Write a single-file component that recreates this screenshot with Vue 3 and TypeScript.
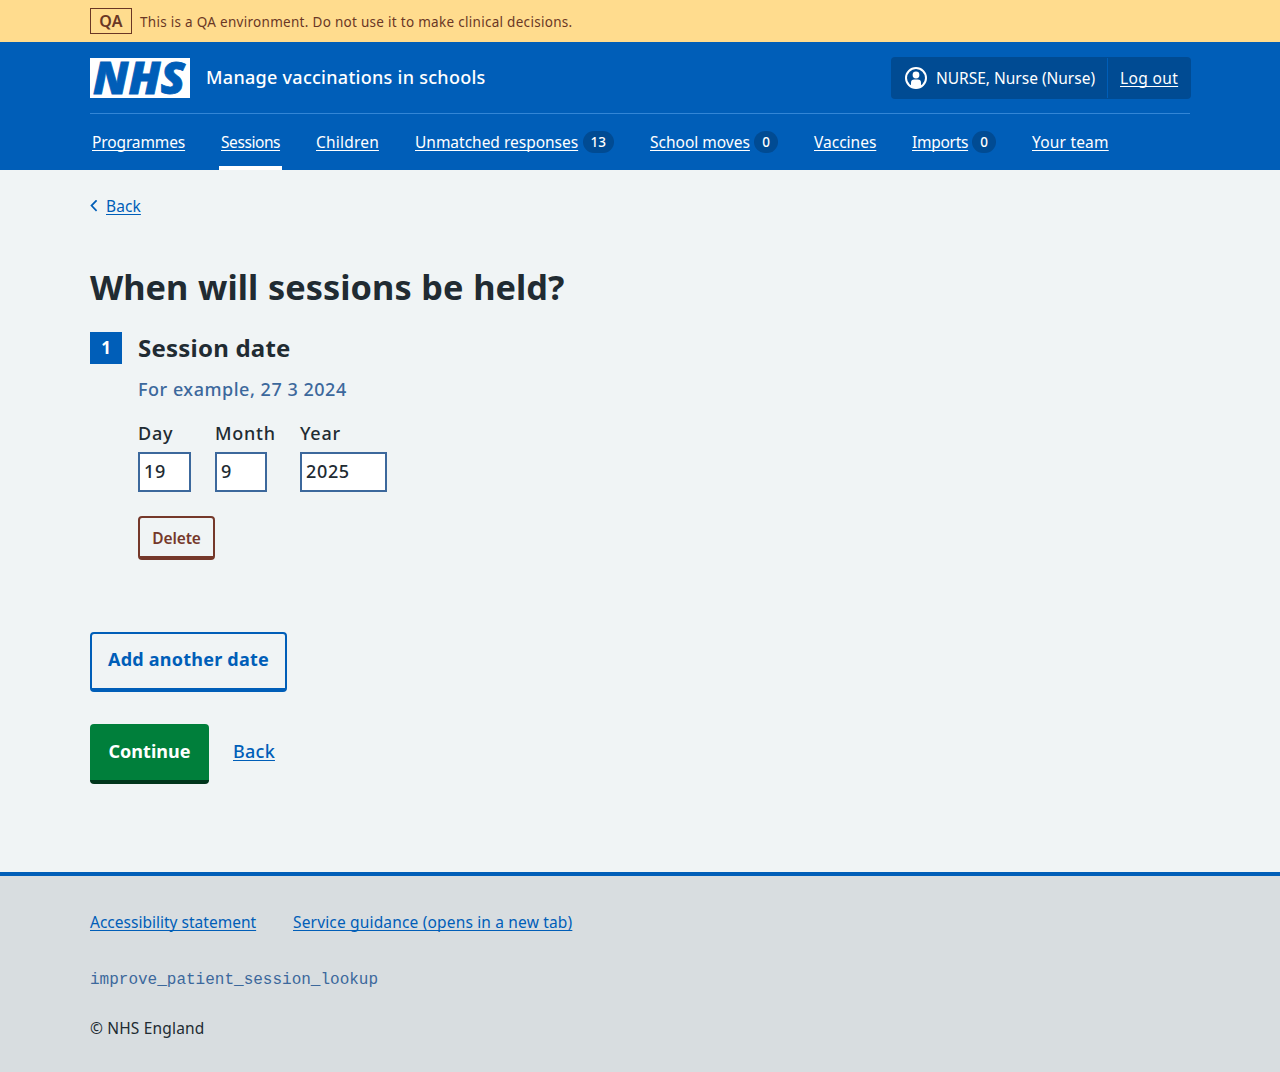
<script setup lang="ts">
import { ref } from 'vue'

interface NavItem {
  label: string
  width: number
  tracking: number
  count?: number
  current?: boolean
}

interface DateField {
  id: string
  label: string
  size: 'two' | 'four'
}

const navItems: NavItem[] = [
  { label: 'Programmes', width: 97, tracking: -0.12 },
  { label: 'Sessions', width: 63, tracking: -0.43, current: true },
  { label: 'Children', width: 67, tracking: 0.2 },
  { label: 'Unmatched responses', width: 203, tracking: -0.01, count: 13 },
  { label: 'School moves', width: 132, tracking: 0, count: 0 },
  { label: 'Vaccines', width: 66, tracking: 0 },
  { label: 'Imports', width: 88, tracking: -0.28, count: 0 },
  { label: 'Your team', width: 81, tracking: 0.2 },
]

const fields: DateField[] = [
  { id: 'day', label: 'Day', size: 'two' },
  { id: 'month', label: 'Month', size: 'two' },
  { id: 'year', label: 'Year', size: 'four' },
]

const date = ref<Record<string, string>>({ day: '19', month: '9', year: '2025' })
</script>

<template>
  <div class="page">
    <div class="environment">
      <div class="container environment-inner">
        <strong class="environment-tag">QA</strong>
        <span>This is a QA environment. Do not use it to make clinical decisions.</span>
      </div>
    </div>

    <header class="header">
      <div class="container">
        <div class="header-top">
          <svg class="logo" viewBox="0 0 100 40" role="img" aria-label="NHS">
            <rect width="100" height="40" fill="#fff" />
            <text x="3" y="36" textLength="92" lengthAdjust="spacingAndGlyphs">NHS</text>
          </svg>
          <span class="service">Manage vaccinations in schools</span>
          <div class="account">
            <span class="account-user">
              <svg class="account-icon" viewBox="0 0 24 24" aria-hidden="true">
                <circle cx="12" cy="12" r="10" fill="none" stroke="#fff" stroke-width="2" />
                <circle cx="12" cy="9" r="3.4" fill="#fff" />
                <path d="M7 21v-4.2A3.3 3.3 0 0 1 10.3 13.5h3.4A3.3 3.3 0 0 1 17 16.8V21a10.5 10.5 0 0 1-10 0z" fill="#fff" />
              </svg>
              <span class="account-name">NURSE, Nurse (Nurse)</span>
            </span>
            <a class="account-logout" href="#">Log out</a>
          </div>
        </div>
        <nav class="nav">
          <div
            v-for="item in navItems"
            :key="item.label"
            class="nav-item"
            :class="{ current: item.current }"
            :style="{ width: item.width + 'px' }"
          >
            <a href="#" :style="{ letterSpacing: item.tracking + 'px' }">{{ item.label }}</a>
            <span v-if="item.count !== undefined" class="badge">{{ item.count }}</span>
          </div>
        </nav>
      </div>
    </header>

    <main class="container main">
      <div class="back">
        <svg width="8" height="12" viewBox="0 0 8 12" aria-hidden="true">
          <path d="M6.6 .3 1.5 5.6l5.1 5.3" fill="none" stroke="#005eb8" stroke-width="1.7" />
        </svg>
        <a href="#">Back</a>
      </div>

      <h1>When will sessions be held?</h1>

      <section class="session">
        <span class="number">1</span>
        <div>
          <h2>Session date</h2>
          <p class="hint">For example, 27 3 2024</p>
          <div class="date">
            <div v-for="f in fields" :key="f.id" class="field" :class="f.id">
              <label :for="f.id">{{ f.label }}</label>
              <input :id="f.id" v-model="date[f.id]" :class="f.size" type="text" inputmode="numeric" />
            </div>
          </div>
          <button class="button delete" type="button">Delete</button>
        </div>
      </section>

      <button class="button add" type="button">Add another date</button>

      <div class="actions">
        <button class="button continue" type="button">Continue</button>
        <a href="#">Back</a>
      </div>
    </main>

    <footer class="footer">
      <div class="container">
        <div class="footer-links">
          <a class="accessibility" href="#">Accessibility statement</a>
          <a class="guidance" href="#">Service guidance (opens in a new tab)</a>
        </div>
        <code>improve_patient_session_lookup</code>
        <p class="copyright">© NHS England</p>
      </div>
    </footer>
  </div>
</template>

<style>
body {
  background: #f0f4f5;
}
</style>

<style scoped>
* {
  box-sizing: border-box;
}
.page {
  height: 1072px;
  display: flex;
  flex-direction: column;
  overflow: hidden;
  background: #f0f4f5;
  color: #212b32;
  font: 450 15.5px/24px 'Noto Sans', 'Open Sans', sans-serif;
}
.container {
  width: 1100px;
  margin: 0 auto;
}
a {
  color: #005eb8;
  text-decoration: underline;
  text-decoration-thickness: 1px;
  text-underline-offset: 2px;
  text-decoration-skip-ink: none;
}

.environment {
  height: 42px;
  background: #ffdc8e;
  color: #6a3725;
  font-size: 13.5px;
  letter-spacing: 0.29px;
}
.environment-inner {
  display: flex;
  align-items: center;
  gap: 8px;
  height: 42px;
}
.environment-inner span {
  padding-top: 1px;
}
.environment-tag {
  width: 42px;
  height: 26px;
  border: 1px solid #6a3725;
  font-size: 16px;
  font-weight: 650;
  letter-spacing: 0.3px;
  line-height: 24px;
  text-align: center;
}

.header {
  height: 128px;
  background: #005eb8;
  color: #fff;
}
.header a {
  color: #fff;
}
.header-top {
  display: flex;
  align-items: center;
  height: 72px;
  border-bottom: 1px solid #3386d6;
}
.logo {
  width: 100px;
  height: 40px;
  overflow: visible;
}
.logo text {
  fill: #005eb8;
  stroke: #005eb8;
  stroke-width: 0.8px;
  font: italic 900 44.5px 'Noto Sans', 'Open Sans', sans-serif;
}
.service {
  margin-left: 16px;
  font-size: 18px;
  font-weight: 480;
  letter-spacing: 0.28px;
  line-height: 26px;
  padding-bottom: 1px;
}
.account {
  display: flex;
  width: 300px;
  height: 42px;
  margin: 0 -1px 0 auto;
  padding: 1px 0;
  border-radius: 4px;
  background: #004b93;
  line-height: 40px;
}
.account-user {
  display: flex;
  align-items: center;
  width: 217px;
  padding-left: 13px;
  border-right: 1px solid #005eb8;
}
.account-icon {
  width: 24px;
  height: 24px;
}
.account-name {
  margin-left: 8px;
  letter-spacing: -0.01px;
  white-space: nowrap;
}
.account-logout {
  margin-left: 12px;
  letter-spacing: 0.36px;
}
.nav {
  display: flex;
  gap: 32px;
  height: 56px;
}
.nav-item {
  display: flex;
  align-items: center;
  flex: none;
  height: 56px;
  padding: 4px 2px 0;
  border-bottom: 4px solid transparent;
  white-space: nowrap;
}
.nav-item.current {
  border-bottom-color: #fff;
}
.badge {
  min-width: 24px;
  height: 22px;
  margin-left: auto;
  padding: 0 8px;
  border-radius: 11px;
  background: #004b93;
  font-size: 13.5px;
  font-weight: 500;
  line-height: 23px;
  text-align: center;
}

.main {
  flex: none;
  height: 702px;
}
.back {
  display: flex;
  align-items: center;
  gap: 8px;
  height: 24px;
  margin-top: 24px;
  letter-spacing: 0.1px;
}
h1 {
  margin: 42px 0 0;
  font-size: 34.3px;
  font-weight: 700;
  letter-spacing: 0.06px;
  word-spacing: 0.6px;
  line-height: 54px;
}
.session {
  display: flex;
  gap: 16px;
  height: 228px;
  margin-top: 18px;
}
.number {
  flex: none;
  width: 32px;
  height: 32px;
  background: #005eb8;
  color: #fff;
  font-size: 17px;
  font-weight: 700;
  line-height: 32px;
  text-align: center;
}
h2 {
  margin: 0;
  font-size: 24px;
  font-weight: 700;
  letter-spacing: 0.22px;
  line-height: 32px;
}
.hint {
  margin: 12px 0 0;
  color: #3c689c;
  font-size: 18px;
  font-weight: 480;
  letter-spacing: 0.52px;
  line-height: 27px;
}
.date {
  display: flex;
  margin-top: 16px;
}
.field {
  font-size: 18px;
  font-weight: 500;
  letter-spacing: 0.75px;
}
.field.day {
  width: 77px;
}
.field.month {
  width: 85px;
}
.field label {
  display: block;
  height: 33px;
  line-height: 28px;
}
input {
  display: block;
  height: 40px;
  padding: 0 4px 2px;
  border: 2px solid #3c689c;
  border-radius: 0;
  background: #fff;
  color: #212b32;
  font: inherit;
  letter-spacing: 0.65px;
}
.two {
  width: 53px;
}
.month .two {
  width: 52px;
}
.four {
  width: 87px;
}
.button {
  display: block;
  padding: 0;
  border: 0;
  border-radius: 4px;
  font: 700 18px/28px 'Noto Sans', 'Open Sans', sans-serif;
  text-align: center;
}
.delete {
  width: 77px;
  height: 44px;
  margin-top: 24px;
  padding-top: 2px;
  border: 2px solid #75382a;
  border-bottom-width: 4px;
  background: transparent;
  color: #75382a;
  font-size: 15.5px;
  font-weight: 650;
  letter-spacing: -0.1px;
}
.add {
  width: 197px;
  height: 60px;
  margin-top: 72px;
  padding-bottom: 4px;
  border: 2px solid #005eb8;
  border-bottom-width: 4px;
  background: transparent;
  color: #005eb8;
  letter-spacing: 0.22px;
}
.actions {
  display: flex;
  gap: 24px;
  margin-top: 32px;
  font-size: 18px;
  font-weight: 480;
  letter-spacing: 0.25px;
  line-height: 54px;
}
.continue {
  width: 119px;
  height: 60px;
  padding-bottom: 2px;
  border-bottom: 4px solid #00351b;
  background: #007f3b;
  color: #fff;
  letter-spacing: 0.05px;
}

.footer {
  flex: 1;
  border-top: 4px solid #005eb8;
  background: #d8dde0;
}
.footer-links {
  display: flex;
  margin-top: 34px;
}
.accessibility {
  width: 203px;
  letter-spacing: 0.01px;
}
.guidance {
  letter-spacing: 0.165px;
}
code {
  display: block;
  margin-top: 34px;
  color: #3c689c;
  font: 16px/24px 'Liberation Mono', monospace;
}
.copyright {
  margin: 24px 0 0;
  letter-spacing: 0.17px;
}
</style>
